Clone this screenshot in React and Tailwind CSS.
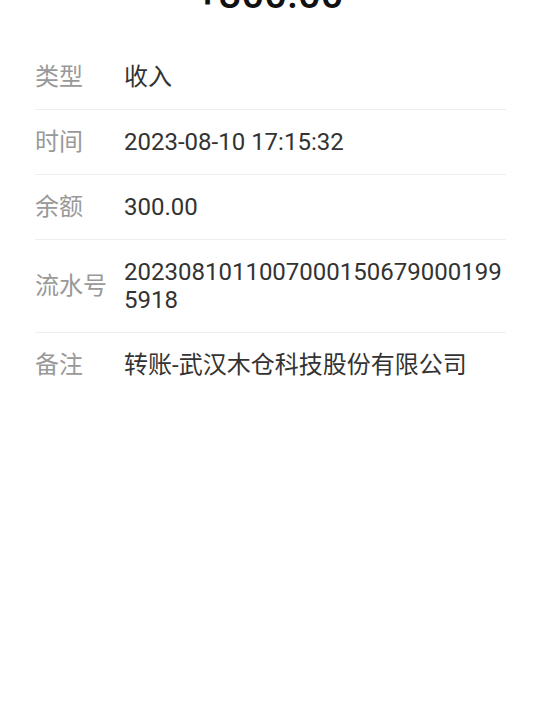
export default function App() {
  const rows = [
    { label: "类型", value: "收入" },
    { label: "时间", value: "2023-08-10 17:15:32" },
    { label: "余额", value: "300.00" },
    { label: "流水号", value: "20230810110070001506790001995918" },
    { label: "备注", value: "转账-武汉木仓科技股份有限公司" },
  ];
  return (
    <div
      className="w-[540px] h-[720px] bg-white overflow-hidden"
      style={{ fontFamily: 'Roboto, "Noto Sans CJK SC", sans-serif' }}
    >
      <div className="-mt-[25px] text-center text-[40px] leading-[40px] font-medium text-[#111111]">
        +300.00
      </div>
      <div className="mt-[30px] pl-[35px] pr-[34px]">
        {rows.map((r, i) => (
          <div
            key={r.label}
            className={`flex items-center py-[18px] ${i < rows.length - 1 ? "border-b border-[#eeeeee]" : ""}`}
          >
            <div className="w-[89px] shrink-0 text-[24px] leading-[28px] text-[#999999]">
              {r.label}
            </div>
            <div className="flex-1 min-w-0 break-all text-[24px] leading-[28px] text-[#333333]">
              {r.value}
            </div>
          </div>
        ))}
      </div>
    </div>
  );
}
